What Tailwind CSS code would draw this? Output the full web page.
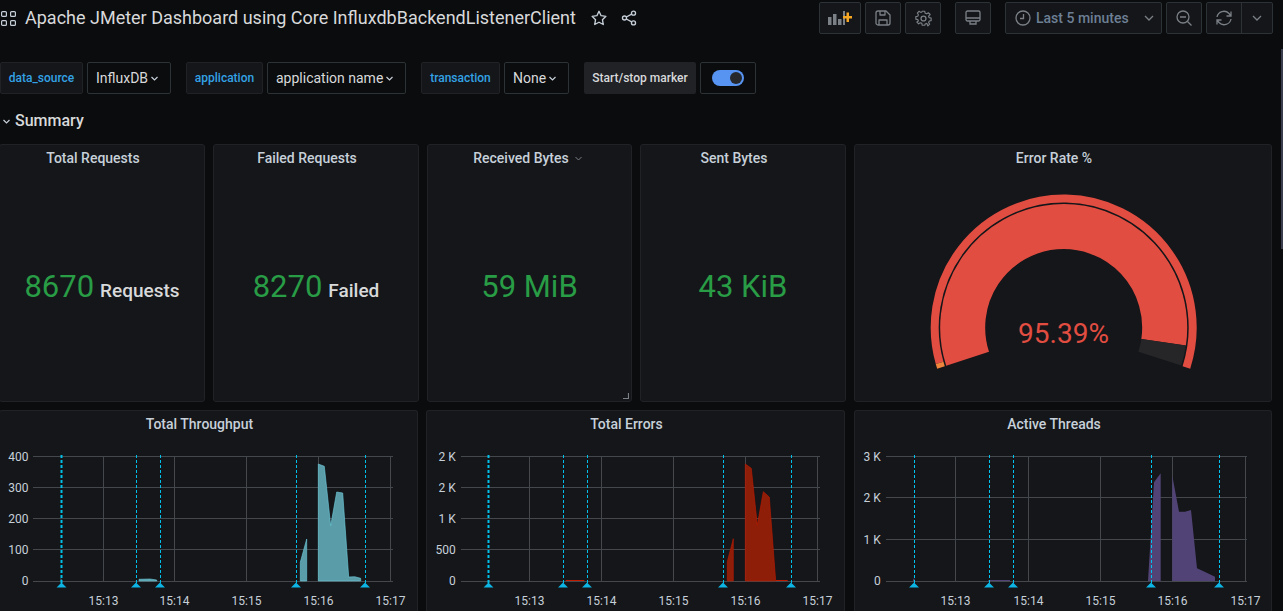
<!DOCTYPE html>
<html lang="en">
<head>
    <meta charset="UTF-8">
    <title>Apache JMeter Dashboard</title>
    <script src="https://cdn.jsdelivr.net/npm/@tailwindcss/browser@4"></script>
</head>
<body class="bg-[#0b0c0e] w-[1283px] h-[611px] overflow-hidden font-['Roboto',sans-serif] text-[#c7d0d9] relative">
    <!-- Top bar -->
    <div class="flex items-center h-[36px]">
        <svg class="ml-[1px] w-[15px] h-[15px] shrink-0" viewBox="0 0 15 15" fill="none" stroke="#c7d0d9" stroke-width="1.2">
            <rect x="0.6" y="0.6" width="4.8" height="4.8" rx="1"/><rect x="9.6" y="0.6" width="4.8" height="4.8" rx="1"/>
            <rect x="0.6" y="9.6" width="4.8" height="4.8" rx="1"/><rect x="9.6" y="9.6" width="4.8" height="4.8" rx="1"/>
        </svg>
        <h1 class="ml-[9px] w-[551px] shrink-0 text-[18px] leading-none whitespace-nowrap text-[#d8d9da]">Apache JMeter Dashboard using Core InfluxdbBackendListenerClient</h1>
        <svg class="ml-[14px] w-[18px] h-[18px] shrink-0" viewBox="0 0 24 24" fill="none" stroke="#c7d0d9" stroke-width="1.8" stroke-linejoin="round">
            <path d="M12 3l2.8 5.9 6.4.9-4.6 4.5 1.1 6.4L12 17.7l-5.700 3 1.100-6.400-4.600-4.500 6.400-.9z"/>
        </svg>
        <svg class="ml-[12px] w-[18px] h-[18px] shrink-0" viewBox="0 0 24 24" fill="none" stroke="#c7d0d9" stroke-width="1.8">
            <circle cx="18" cy="5.5" r="2.7"/><circle cx="6" cy="12" r="2.7"/><circle cx="18" cy="18.5" r="2.7"/>
            <path d="M8.4 10.7l7.2-3.9M8.4 13.3l7.2 3.9"/>
        </svg>
        <div class="ml-[181px] flex items-center h-[32px] text-[#7b8087]">
            <div class="w-[42px] h-full flex items-center justify-center bg-[#141619] border border-[#2c3235] rounded-[2px]">
                <svg class="w-[24px] h-[14px]" viewBox="0 0 24 14"><path fill="#7b8087" d="M0 6h3.5v8H0zM5 3h3.5v11H5zM10 8h3.5v6H10zM15 0h2v14h-2z"/><path fill="#f5a623" d="M18.500 1.500h2.500v3.500h3v2.600h-3V11h-2.500V7.600H15V5h3.500z"/></svg>
            </div>
            <div class="ml-[4px] w-[36px] h-full flex items-center justify-center bg-[#141619] border border-[#2c3235] rounded-[2px]">
                <svg class="w-[16px] h-[16px]" viewBox="0 0 16 16" fill="none" stroke="#7b8087" stroke-width="1.300" stroke-linejoin="round"><path d="M3 1h8l4 4v8a2 2 0 0 1-2 2H3a2 2 0 0 1-2-2V3a2 2 0 0 1 2-2z"/><path d="M5 1v4h5V1M4 15v-5h8v5"/></svg>
            </div>
            <div class="ml-[4px] w-[36px] h-full flex items-center justify-center bg-[#141619] border border-[#2c3235] rounded-[2px]">
                <svg class="w-[17px] h-[17px]" viewBox="0 0 24 24" fill="none" stroke="#7b8087" stroke-width="1.800" stroke-linejoin="round"><circle cx="12" cy="12" r="3.500"/><path d="M10 2h4l.6 3 2.400 1 2.600-1.700 2.800 2.800L20 9.700l1 2.300 3 .6v4l-3 .6-1 2.400 1.700 2.600-2.800 2.800L17.300 21l-2.700 1-.6 2h-4l-.6-3-2.400-1-2.600 1.700-2.800-2.800L4 17.300 3 15l-3-.6v-4l3-.6 1-2.400L2.300 4.800l2.800-2.800L7.700 3.700 9.400 3z" transform="translate(1.200 0) scale(.9)"/></svg>
            </div>
            <div class="ml-[14px] w-[36px] h-full flex items-center justify-center bg-[#141619] border border-[#2c3235] rounded-[2px]">
                <svg class="w-[16px] h-[16px]" viewBox="0 0 16 16" fill="none" stroke="#7b8087" stroke-width="1.300"><rect x="1" y="1" width="14" height="10" rx="1.500"/><path d="M1 8h14M5 11v3h6v-3"/></svg>
            </div>
            <div class="ml-[14px] w-[157px] h-full flex items-center pl-[9px] bg-[#141619] border border-[#2c3235] rounded-[2px]">
                <svg class="w-[16px] h-[16px]" viewBox="0 0 16 16" fill="none" stroke="#7b8087" stroke-width="1.300"><circle cx="8" cy="8" r="7"/><path d="M8.500 4v4.500H5"/></svg>
                <span class="ml-[5px] text-[14px] font-medium text-[#6d7f94]">Last 5 minutes</span>
                <svg class="ml-[15px] w-[10px] h-[6px]" viewBox="0 0 10 6" fill="none" stroke="#7b8087" stroke-width="1.300"><path d="M1 1l4 4 4-4"/></svg>
            </div>
            <div class="ml-[4px] w-[36px] h-full flex items-center justify-center bg-[#141619] border border-[#2c3235] rounded-[2px]">
                <svg class="w-[16px] h-[16px]" viewBox="0 0 16 16" fill="none" stroke="#7b8087" stroke-width="1.300"><circle cx="7" cy="7" r="6"/><path d="M4 7h6M11.500 11.500L15.500 15.500"/></svg>
            </div>
            <div class="ml-[4px] w-[67px] h-full flex bg-[#141619] border border-[#2c3235] rounded-[2px]">
                <div class="w-[35px] flex items-center justify-center border-r border-[#2c3235]">
                    <svg class="w-[16px] h-[16px]" viewBox="0 0 16 16" fill="none" stroke="#7b8087" stroke-width="1.300"><path d="M1 7a7 7 0 0 1 12-3.500L15 6M15 1.500V6h-4.500M15 9a7 7 0 0 1-12 3.500L1 10M1 14.500V10h4.500"/></svg>
                </div>
                <div class="flex-1 flex items-center justify-center">
                    <svg class="w-[10px] h-[6px]" viewBox="0 0 10 6" fill="none" stroke="#7b8087" stroke-width="1.300"><path d="M1 1l4 4 4-4"/></svg>
                </div>
            </div>
        </div>
    </div>

    <!-- Variables -->
    <div class="flex items-center h-[32px] mt-[26px]">
        <div class="w-[83px] h-full flex items-center justify-center bg-[#141619] border border-[#202226] rounded-[2px] text-[12px] font-medium text-[#33a2e5]">data_source</div>
        <div class="ml-[4px] w-[84px] h-full flex items-center pl-[8px] gap-[3px] border border-[#2c3235] rounded-[2px] text-[14px] text-[#d8d9da]">InfluxDB
            <svg class="w-[7px] h-[5px]" viewBox="0 0 7 5" fill="none" stroke="#c7d0d9" stroke-width="1.200"><path d="M.5 1l3 3 3-3"/></svg>
        </div>
        <div class="ml-[15px] w-[77px] h-full flex items-center justify-center bg-[#141619] border border-[#202226] rounded-[2px] text-[12px] font-medium text-[#33a2e5]">application</div>
        <div class="ml-[4px] w-[139px] h-full flex items-center pl-[8px] gap-[3px] border border-[#2c3235] rounded-[2px] text-[14px] text-[#d8d9da]">application name
            <svg class="w-[7px] h-[5px]" viewBox="0 0 7 5" fill="none" stroke="#c7d0d9" stroke-width="1.200"><path d="M.5 1l3 3 3-3"/></svg>
        </div>
        <div class="ml-[15px] w-[79px] h-full flex items-center justify-center bg-[#141619] border border-[#202226] rounded-[2px] text-[12px] font-medium text-[#33a2e5]">transaction</div>
        <div class="ml-[4px] w-[65px] h-full flex items-center pl-[8px] gap-[3px] border border-[#2c3235] rounded-[2px] text-[14px] text-[#d8d9da]">None
            <svg class="w-[7px] h-[5px]" viewBox="0 0 7 5" fill="none" stroke="#c7d0d9" stroke-width="1.200"><path d="M.5 1l3 3 3-3"/></svg>
        </div>
        <div class="ml-[15px] w-[112px] h-full flex items-center justify-center bg-[#202226] rounded-[2px] text-[12px] font-medium text-[#d8d9da]">Start/stop marker</div>
        <div class="ml-[4px] w-[56px] h-full flex items-center justify-center border border-[#2c3235] rounded-[2px]">
            <div class="w-[32px] h-[16px] rounded-full bg-[#5794f2] flex items-center justify-end pr-[2px]">
                <div class="w-[12px] h-[12px] rounded-full bg-[#26282c]"></div>
            </div>
        </div>
    </div>

    <!-- Summary row -->
    <div class="flex items-center h-[24px] mt-[15px] pl-[3px]">
        <svg class="w-[7px] h-[5px]" viewBox="0 0 7 5" fill="none" stroke="#c7d0d9" stroke-width="1.200"><path d="M.5 1l3 3 3-3"/></svg>
        <span class="ml-[5px] text-[16px] font-medium text-[#d8d9da]">Summary</span>
    </div>

    <!-- Stat panels -->
    <div class="flex h-[258px] mt-[11px] ml-[-1px]">
        <div class="w-[206px] flex flex-col bg-[#141619] border border-[#202226] rounded-[3px]">
            <div class="h-[27px] pr-[18px] flex items-center justify-center text-[14px] font-medium">Total Requests</div>
            <div class="flex-1 flex items-baseline justify-center pt-[92px]"><span class="text-[31px] text-[#299c46]">8670</span><span class="ml-[6px] text-[19px] font-medium text-[#d8d9da]">Requests</span></div>
        </div>
        <div class="ml-[8px] w-[206px] flex flex-col bg-[#141619] border border-[#202226] rounded-[3px]">
            <div class="h-[27px] pr-[18px] flex items-center justify-center text-[14px] font-medium">Failed Requests</div>
            <div class="flex-1 flex items-baseline justify-center pt-[92px]"><span class="text-[31px] text-[#299c46]">8270</span><span class="ml-[6px] text-[19px] font-medium text-[#d8d9da]">Failed</span></div>
        </div>
        <div class="ml-[8px] w-[205px] flex flex-col bg-[#141619] border border-[#202226] rounded-[3px] relative">
            <div class="h-[27px] pr-[4px] flex items-center justify-center gap-[6px] text-[14px] font-medium">Received Bytes
                <svg class="w-[7px] h-[5px]" viewBox="0 0 7 5" fill="none" stroke="#7b8087"><path d="M.5 1l3 3 3-3"/></svg>
            </div>
            <div class="flex-1 flex items-baseline justify-center pt-[92px]"><span class="text-[31px] text-[#299c46]">59 MiB</span></div>
            <svg class="absolute right-[2px] bottom-[2px] w-[6px] h-[6px]" viewBox="0 0 6 6" fill="none" stroke="#7b8087" stroke-width="1.200"><path d="M5.500 0v5.500H0"/></svg>
        </div>
        <div class="ml-[8px] w-[206px] flex flex-col bg-[#141619] border border-[#202226] rounded-[3px]">
            <div class="h-[27px] pr-[18px] flex items-center justify-center text-[14px] font-medium">Sent Bytes</div>
            <div class="flex-1 flex items-baseline justify-center pt-[92px]"><span class="text-[31px] text-[#299c46]">43 KiB</span></div>
        </div>
        <div class="ml-[8px] w-[418px] flex flex-col bg-[#141619] border border-[#202226] rounded-[3px]">
            <div class="h-[27px] pr-[18px] flex items-center justify-center text-[14px] font-medium">Error Rate %</div>
            <svg class="w-[416px] h-[229px]" viewBox="855 172 416 229" fill="none">
                <path d="M939.600 362.800A129 129 0 1 1 1186.400 367.400" stroke="#e24d42" stroke-width="8"/>
                <path d="M941 367.400A129 129 0 0 1 939.600 362.800" stroke="#ef843c" stroke-width="8"/>
                <path d="M967.600 358.700A101 101 0 1 1 1163.600 342.300" stroke="#e24d42" stroke-width="45"/>
                <path d="M1163.600 342.300A101 101 0 0 1 1159.800 358.700" stroke="#262628" stroke-width="45"/>
                <text x="1063.500" y="342.700" text-anchor="middle" font-size="28" fill="#e24d42">95.39%</text>
            </svg>
        </div>
    </div>

    <!-- Graph panels -->
    <div class="flex h-[201px] mt-[8px] ml-[-1px]">
        <div class="w-[419px] flex flex-col bg-[#141619] border-t border-x border-[#202226] rounded-t-[3px]">
            <div class="h-[27px] pr-[18px] flex items-center justify-center text-[14px] font-medium">Total Throughput</div>
            <svg class="w-[417px] h-[173px]" viewBox="0 438 417 173" font-size="12" fill="#c7d0d9">
                <g stroke="#44474b" stroke-width="1" fill="none">
                    <path d="M33 456.500H393M33 487.500H393M33 518.500H393M33 549.500H393M33 581.500H393"/>
                    <path d="M103.500 456V581M174.500 456V581M246.500 456V581M318.500 456V581M390.500 456V581"/>
                </g>
                <path d="M60.700 581V578L62.300 581z" fill="#5a9ca8"/>
                <path d="M139 581V579.300L150 579L156.700 580V581zM300.300 581V562.300L306.700 539V581zM318.300 581V464L324.300 466.300L330.700 525.700L336.700 492L342.700 493L348.700 577L354.700 576.700L360.700 578.300V581z" fill="#5a9ca8" stroke="#6ed0e0" stroke-width=".6"/>
                <g stroke="#00bfe8" stroke-dasharray="3 2" fill="none">
                    <path d="M61.500 455V583" stroke-width="2"/><path d="M136.500 455V583"/><path d="M160.500 455V583"/><path d="M296.500 455V583"/><path d="M365.500 455V583"/>
                </g>
                <g fill="#0db4e4" stroke="none">
                    <path d="M61.500 582.500l5 5h-10zM136 582.500l5 5h-10zM160 582.500l5 5h-10zM296 582.500l5 5h-10zM365 582.500l5 5h-10z"/>
                </g>
                <g text-anchor="end"><text x="28.500" y="460.500">400</text><text x="28.500" y="491.500">300</text><text x="28.500" y="522.500">200</text><text x="28.500" y="553.500">100</text><text x="28.500" y="585">0</text></g>
                <g text-anchor="middle"><text x="103.500" y="605">15:13</text><text x="174.500" y="605">15:14</text><text x="246.500" y="605">15:15</text><text x="318.500" y="605">15:16</text><text x="390.500" y="605">15:17</text></g>
            </svg>
        </div>
        <div class="ml-[8px] w-[419px] flex flex-col bg-[#141619] border-t border-x border-[#202226] rounded-t-[3px]">
            <div class="h-[27px] pr-[18px] flex items-center justify-center text-[14px] font-medium">Total Errors</div>
            <svg class="w-[417px] h-[173px]" viewBox="427 438 417 173" font-size="12" fill="#c7d0d9">
                <g stroke="#44474b" stroke-width="1" fill="none">
                    <path d="M461 456.500H820M461 487.500H820M461 518.500H820M461 549.500H820M461 581.500H820"/>
                    <path d="M529.500 456V581M601.500 456V581M673.500 456V581M745.500 456V581M817.500 456V581"/>
                </g>
                <path d="M488 581V580H489.500V581zM565.700 581V580H584.300V581zM775.700 581V580H787.700V581z" fill="#bf1b00"/>
                <path d="M727.300 581V561.700L733.300 538.700V581zM745.300 581V464L751.300 468.300L757.300 525L763.300 491.700L769.300 497L775.700 581z" fill="#8f1e09" stroke="#bf1b00" stroke-width=".6"/>
                <g stroke="#00bfe8" stroke-dasharray="3 2" fill="none">
                    <path d="M488.500 455V583" stroke-width="2"/><path d="M563.500 455V583"/><path d="M587.500 455V583"/><path d="M723.500 455V583"/><path d="M791.500 455V583"/>
                </g>
                <g fill="#0db4e4" stroke="none">
                    <path d="M488.500 582.500l5 5h-10zM563 582.500l5 5h-10zM587 582.500l5 5h-10zM723 582.500l5 5h-10zM791 582.500l5 5h-10z"/>
                </g>
                <g text-anchor="end"><text x="455.700" y="460.500">2 K</text><text x="455.700" y="491.500">2 K</text><text x="455.700" y="522.500">1 K</text><text x="455.700" y="553.500">500</text><text x="455.700" y="585">0</text></g>
                <g text-anchor="middle"><text x="529.500" y="605">15:13</text><text x="601.500" y="605">15:14</text><text x="673.500" y="605">15:15</text><text x="745.500" y="605">15:16</text><text x="817.500" y="605">15:17</text></g>
            </svg>
        </div>
        <div class="ml-[9px] w-[418px] flex flex-col bg-[#141619] border-t border-x border-[#202226] rounded-t-[3px]">
            <div class="h-[27px] pr-[18px] flex items-center justify-center text-[14px] font-medium">Active Threads</div>
            <svg class="w-[416px] h-[173px]" viewBox="855 438 416 173" font-size="12" fill="#c7d0d9">
                <g stroke="#44474b" stroke-width="1" fill="none">
                    <path d="M886 456.500H1247M886 497.500H1247M886 539.500H1247M886 581.500H1247"/>
                    <path d="M955.500 456V581M1028.500 456V581M1100.500 456V581M1172.500 456V581M1245.500 456V581"/>
                </g>
                <path d="M913 581V580L914 578L915 581zM988.300 581V580H1010V581zM1148 581L1154 482.300L1160.700 473.300V581zM1172.300 581V475.700L1179 511.700L1185 511.700L1191 510L1197 568.300L1203 571L1215 576.700V581z" fill="#524376"/>
                <g stroke="#00c3f0" stroke-dasharray="3 2" fill="none">
                    <path d="M914.500 455V583"/><path d="M989.500 455V583"/><path d="M1013.500 455V583"/><path d="M1151.500 455V583"/><path d="M1219.500 455V583"/>
                </g>
                <g fill="#0db4e4" stroke="none">
                    <path d="M914 582.500l5 5h-10zM989 582.500l5 5h-10zM1013 582.500l5 5h-10zM1151 582.500l5 5h-10zM1219 582.500l5 5h-10z"/>
                </g>
                <g text-anchor="end"><text x="880.700" y="460.500">3 K</text><text x="880.700" y="501.500">2 K</text><text x="880.700" y="543.500">1 K</text><text x="880.700" y="585">0</text></g>
                <g text-anchor="middle"><text x="955.500" y="605">15:13</text><text x="1028.500" y="605">15:14</text><text x="1100.500" y="605">15:15</text><text x="1172.500" y="605">15:16</text><text x="1245.500" y="605">15:17</text></g>
            </svg>
        </div>
    </div>

    <!-- Scrollbar thumb -->
    <div class="absolute right-0 top-[49px] w-[2px] h-[200px] bg-[#3a3d4d]"></div>
</body>
</html>
